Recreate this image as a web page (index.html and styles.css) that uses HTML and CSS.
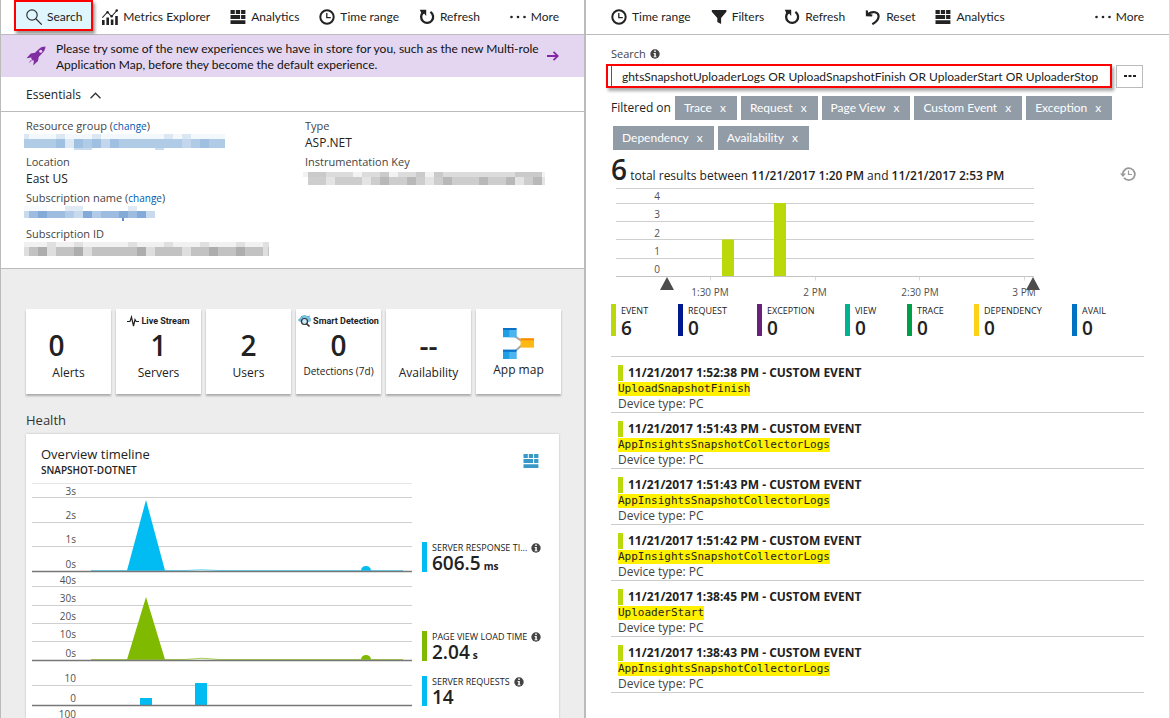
FILE: index.html
```html
<!DOCTYPE html>
<html lang="en">
<head>
<meta charset="utf-8">
<title>Application Insights</title>
<link rel="stylesheet" href="styles.css">
</head>
<body>
<svg class="defs" aria-hidden="true">
  <symbol id="i-search" viewBox="0 0 16 16"><g fill="none" stroke="#333" stroke-width="1.2"><circle cx="6" cy="6" r="5.2"/><path d="M9.8 9.8l6 5.9"/></g></symbol>
  <symbol id="i-metrics" viewBox="0 0 16 16"><path fill="#222" d="M0 11h2.6v5H0zM4.4 8.500h2.600V16H4.400zM8.800 10.500h2.600V16H8.800zM13.200 7h2.600v9h-2.600z"/><path fill="none" stroke="#222" stroke-width="1.100" d="M.3 8.700L5.500 3l4 4.500L15.300 1"/><circle cx="5.500" cy="3.300" r="1.200" fill="#222"/><circle cx="9.600" cy="7.200" r="1.200" fill="#222"/><circle cx="14.700" cy="1.500" r="1.200" fill="#222"/></symbol>
  <symbol id="i-grid" viewBox="0 0 16 16"><path d="M.5 1h4.300v4H.5zM5.800 1h4.300v4H5.800zM11.100 1h4.300v4h-4.300zM.5 6h9.600v4H.5zM11.100 6h4.300v4h-4.300zM.5 11.200h14.900v3.800H.5z"/></symbol>
  <symbol id="i-clock" viewBox="0 0 16 16"><circle cx="8" cy="8" r="6.700" fill="none" stroke="#222" stroke-width="2"/><path d="M7.800 4v4.700h4" fill="none" stroke="#222" stroke-width="1.300"/></symbol>
  <symbol id="i-refresh" viewBox="0 0 16 16"><path d="M11.400 2.900A6 6 0 1 1 4.200 3.400" fill="none" stroke="#222" stroke-width="2.300"/><path d="M.8.800h6.400v6.200L5.100 4.600 3.200 6z" fill="#222"/></symbol>
  <symbol id="i-dots" viewBox="0 0 16 16"><g fill="#222"><circle cx="1.500" cy="8" r="1.300"/><circle cx="8" cy="8" r="1.300"/><circle cx="14.500" cy="8" r="1.300"/></g></symbol>
  <symbol id="i-filter" viewBox="0 0 16 16"><path d="M.8 1h14.600v1.800L10.100 9v6l-3.800-2V9L.8 2.800z" fill="#222"/></symbol>
  <symbol id="i-reset" viewBox="0 0 16 16"><path d="M3 5.200C7.500 1.500 13.800 3 13.600 7.500c-.1 3-2.600 5.700-6.300 7.700" fill="none" stroke="#222" stroke-width="2.200"/><path d="M.800 1.200l2 .3.500 3.300 4.200.8-.4 2L.9 7.200z" fill="#222"/></symbol>
  <symbol id="i-info" viewBox="0 0 10 10"><circle cx="5" cy="5" r="4.700" fill="#444"/><path d="M4.200 1.600h1.600V3H4.200zM3.600 4h2.200v3.400h.8v.9H3.500v-.9h.8V4.900h-.7z" fill="#fff"/></symbol>
</svg>

<main class="blades">
  <section class="blade blade-overview" aria-label="Overview">
    <div class="toolbar">
      <button class="tool tool-marked"><svg class="icon"><use href="#i-search"/></svg>Search</button>
      <button class="tool"><svg class="icon"><use href="#i-metrics"/></svg>Metrics Explorer</button>
      <button class="tool"><svg class="icon"><use href="#i-grid"/></svg>Analytics</button>
      <button class="tool"><svg class="icon"><use href="#i-clock"/></svg>Time range</button>
      <button class="tool"><svg class="icon"><use href="#i-refresh"/></svg>Refresh</button>
      <button class="tool tool-more"><svg class="icon"><use href="#i-dots"/></svg>More</button>
    </div>

    <a class="banner" href="#preview">
      <svg class="rocket" viewBox="0 0 20 20"><path fill="#7f2da1" d="M19.500.5c-2.600.1-4.700.8-6.300 2.200L9 6.800 4.700 7.400.5 12.300l5-.7-.2 1.200 1.200 1.600 1.500 0-.8 5.100 4.800-4.500.7-4.100 4.200-4.300c1.500-1.600 2.400-3.500 2.600-6.100z"/><circle cx="14.700" cy="5.200" r="1.500" fill="#e4d6f0"/><path d="M5 13.500l-2.500 3.800 3.300-2.400z" fill="#a568bd"/></svg>
      <span class="banner-text">Please try some of the new experiences we have in store for you, such as the new Multi-role Application Map, before they become the default experience.</span>
      <svg class="arrow" viewBox="0 0 12 12"><path d="M0 6h10.500M6.500 1.800L10.800 6l-4.300 4.200" fill="none" stroke="#8426a5" stroke-width="1.800"/></svg>
    </a>

    <button class="essentials-toggle">Essentials
      <svg class="chevron" viewBox="0 0 10 6"><path d="M.5 5.500L5 1l4.500 4.500" fill="none" stroke="#333" stroke-width="1.200"/></svg>
    </button>

    <div class="essentials">
      <dl class="props">
        <dt>Resource group (<a href="#change-group">change</a>)</dt>
        <dd><svg class="redacted" width="201" height="16" viewBox="0 0 201 16" shape-rendering="crispEdges"><path fill="#f3f8fc" d="M0 0h201v5H0z"/><path stroke="#dbe8f4" stroke-width="5" d="M0 2.500h5m27 0h9m27 0h9m63 0h9m9 0h9"/><path fill="#b0cbe6" d="M0 5h201v9H0z"/><path stroke="#9fc0e0" stroke-width="9" d="M32 9.500h9m9 0h9m9 0h9m9 0h9m81 0h9"/><path stroke="#dce8f4" stroke-width="9" d="M41 9.500h9"/><path stroke="#c2d6ed" stroke-width="9" d="M77 9.500h9m72 0h9"/><path stroke="#c9dcef" stroke-width="2" d="M50 15h18m63 0h9"/></svg></dd>
        <dt>Location</dt>
        <dd>East US</dd>
        <dt>Subscription name (<a href="#change-subscription">change</a>)</dt>
        <dd><svg class="redacted" width="131" height="16" viewBox="0 0 131 16" shape-rendering="crispEdges"><path fill="#f8fbfd" d="M0 0h23v5H0z"/><path stroke="#dfeaf4" stroke-width="5" d="M41 2.500h18m45 0h9"/><path fill="#9dbce0" d="M5 5h126v7H5z"/><path stroke="#c7daee" stroke-width="7" d="M0 8.500h5m45 0h9m63 0h9"/><path stroke="#84aad8" stroke-width="7" d="M14 8.500h9m36 0h9m27 0h9m9 0h9"/><path stroke="#b2cbe8" stroke-width="7" d="M41 8.500h9m18 0h9"/><path fill="#5e91cc" d="M98 12h2v3h-2z"/></svg></dd>
        <dt>Subscription ID</dt>
        <dd><svg class="redacted" width="245" height="16" viewBox="0 0 245 16" shape-rendering="crispEdges"><path fill="#f1f1f1" d="M0 0h245v5H0z"/><path stroke="#e0e0e0" stroke-width="5" d="M23 2.500h9m18 0h9m45 0h9m27 0h9m27 0h9m27 0h9m18 0h9"/><path fill="#c2c2c2" d="M0 5h245v9H0z"/><path stroke="#adadad" stroke-width="9" d="M14 9.500h9m27 0h9m54 0h9m63 0h9m18 0h9"/><path stroke="#dedede" stroke-width="9" d="M0 9.500h5m18 0h9m27 0h9m54 0h9m27 0h9m72 0h5"/></svg></dd>
      </dl>
      <dl class="props">
        <dt>Type</dt>
        <dd>ASP.NET</dd>
        <dt>Instrumentation Key</dt>
        <dd><svg class="redacted" width="242" height="16" viewBox="0 0 242 16" shape-rendering="crispEdges"><path fill="#dcdcdc" d="M0 2h242v5H0z"/><path stroke="#cacaca" stroke-width="5" d="M5 4.500h18m54 0h9m27 0h9m9 0h9m72 0h27"/><path stroke="#f2f2f2" stroke-width="5" d="M0 4.500h5m45 0h9m27 0h9m27 0h9m108 0h3"/><path fill="#cdcdcd" d="M5 7h234v8H5z"/><path stroke="#b8b8b8" stroke-width="8" d="M77 11h9m18 0h9m27 0h9m27 0h9m18 0h9m18 0h9"/><path stroke="#e4e4e4" stroke-width="8" d="M23 11h9m27 0h9m54 0h9m81 0h9m18 0h3"/></svg></dd>
      </dl>
    </div>

    <div class="overview-body">
      <div class="tiles">
        <a class="tile" href="#alerts"><span class="tile-number tile-number-slot">0</span><span class="tile-label">Alerts</span></a>
        <a class="tile" href="#servers">
          <span class="tile-head"><svg width="12" height="12" viewBox="0 0 12 12"><path d="M0 6.500h3L4.500 2l2 9L8 4.500l1.200 2H12" fill="none" stroke="#222" stroke-width="1.200"/></svg>Live Stream</span>
          <span class="tile-number">1</span><span class="tile-label">Servers</span></a>
        <a class="tile" href="#users"><span class="tile-number">2</span><span class="tile-label">Users</span></a>
        <a class="tile" href="#detections">
          <span class="tile-head"><svg width="13" height="12" viewBox="0 0 13 12"><path d="M2 7a3 3 0 0 1 1-5 4 4 0 0 1 7 0 2.500 2.500 0 0 1 1 5z" fill="#7cc3e2"/><path d="M0 5h3M3 1l2 2M9 2l3-1" stroke="#4ba3cc"/><circle cx="6.500" cy="6.500" r="3" fill="#cdeaf5" stroke="#333" stroke-width="1.200"/><path d="M8.500 8.700l3 2.800" stroke="#333" stroke-width="1.600"/></svg>Smart Detection</span>
          <span class="tile-number">0</span><span class="tile-label tile-label-small">Detections (7d)</span></a>
        <a class="tile" href="#availability"><span class="tile-number">--</span><span class="tile-label">Availability</span></a>
        <a class="tile tile-map" href="#app-map">
          <svg class="app-map" viewBox="0 0 30 30"><path d="M10 7l10 7M10 24l10-9" stroke="#aaa" stroke-width="2"/><path fill="#1f9fe5" d="M0 0h13v9H0zM0 21h13v9H0z"/><path fill="#4db4ee" d="M6 2h7v7H6zM6 23h7v7H6z"/><path fill="#0a72c9" d="M0 0h13v2H0zM0 21h13v2H0z"/><path fill="#ffb914" d="M17 10h13v9H17z"/><path fill="#ff8c00" d="M17 10h13v2H17z"/></svg>
          <span class="tile-label">App map</span></a>
      </div>

      <h2 class="section-title">Health</h2>

      <article class="card">
        <header class="card-head">
          <div>
            <h3>Overview timeline</h3>
            <p>SNAPSHOT-DOTNET</p>
          </div>
          <svg class="card-icon"><use href="#i-grid"/></svg>
        </header>
        <div class="timeline">
          <svg class="timeline-chart" viewBox="0 0 380 250" role="img" aria-label="Overview timeline chart">
            <path stroke="#e6e6e6" d="M0 .5h380"/>
            <path stroke="#cfcfcf" d="M0 14.500h380M0 39.500h380M0 63.500h380M0 103.500h380M0 122.500h380M0 140.500h380M0 158.500h380M0 202.500h380"/>
            <path fill="#00bcf2" d="M95 87.500L114 17l19 70.500zM329 87.500a5 4.500 0 0 1 10 0z"/>
            <path fill="none" stroke="#00bcf2" stroke-opacity=".6" d="M59 87.500h94q17-1.500 34 0h184"/>
            <path fill="#7fba00" d="M95 176.500L114 114l19 62.500zM329 176.500a5 4.500 0 0 1 10 0z"/>
            <path fill="none" stroke="#7fba00" stroke-opacity=".7" d="M59 176.500h94q17-2.500 34 0h184"/>
            <path fill="#00bcf2" d="M108 215h12v7h-12zM163 200h12v22h-12z"/>
            <path stroke="#777" stroke-width="1.500" d="M0 88.500h380M0 177.500h380M0 222.500h380"/>
            <g class="axis" text-anchor="end">
              <text x="44" y="12">3s</text><text x="44" y="36">2s</text><text x="44" y="60">1s</text><text x="44" y="85">0s</text>
              <text x="44" y="101">40s</text><text x="44" y="119">30s</text><text x="44" y="137">20s</text><text x="44" y="155">10s</text><text x="44" y="174">0s</text>
              <text x="44" y="199">10</text><text x="44" y="219">0</text><text x="44" y="235">100</text>
            </g>
          </svg>
          <div class="timeline-legend">
            <div class="metric metric-cyan metric-response"><div class="metric-name"><span>SERVER RESPONSE TI...</span><svg class="info"><use href="#i-info"/></svg></div><div class="metric-value">606.5<small>ms</small></div></div>
            <div class="metric metric-green metric-load"><div class="metric-name"><span>PAGE VIEW LOAD TIME</span><svg class="info"><use href="#i-info"/></svg></div><div class="metric-value">2.04<small>s</small></div></div>
            <div class="metric metric-cyan"><div class="metric-name"><span>SERVER REQUESTS</span><svg class="info"><use href="#i-info"/></svg></div><div class="metric-value">14</div></div>
          </div>
        </div>
      </article>
    </div>
  </section>

  <section class="blade blade-search" aria-label="Search">
    <div class="toolbar">
      <button class="tool"><svg class="icon"><use href="#i-clock"/></svg>Time range</button>
      <button class="tool"><svg class="icon"><use href="#i-filter"/></svg>Filters</button>
      <button class="tool"><svg class="icon"><use href="#i-refresh"/></svg>Refresh</button>
      <button class="tool"><svg class="icon"><use href="#i-reset"/></svg>Reset</button>
      <button class="tool"><svg class="icon"><use href="#i-grid"/></svg>Analytics</button>
      <button class="tool tool-more"><svg class="icon"><use href="#i-dots"/></svg>More</button>
    </div>

    <div class="search-body">
      <label class="search-label" for="query">Search <svg class="info"><use href="#i-info"/></svg></label>
      <div class="search-row">
        <div class="search-frame"><input id="query" type="text" value="ghtsSnapshotUploaderLogs OR UploadSnapshotFinish OR UploaderStart OR UploaderStop"></div>
        <button class="search-more" aria-label="More search options"><svg width="12" height="4" viewBox="0 0 12 4"><path d="M0 1h3v2H0zM4.500 1h3v2h-3zM9 1h3v2H9z" fill="#222"/></svg></button>
      </div>

      <div class="filters">
        <span class="filters-label">Filtered on</span>
        <button class="chip">Trace <span>x</span></button>
        <button class="chip">Request <span>x</span></button>
        <button class="chip">Page View <span>x</span></button>
        <button class="chip">Custom Event <span>x</span></button>
        <button class="chip">Exception <span>x</span></button>
        <button class="chip">Dependency <span>x</span></button>
        <button class="chip">Availability <span>x</span></button>
      </div>

      <div class="summary">
        <p><span class="count">6</span> total results between <b>11/21/2017 1:20 PM</b> and <b>11/21/2017 2:53 PM</b></p>
        <svg class="history" viewBox="0 0 16 16"><path d="M2.800 8A6 6 0 1 1 4 11.800" fill="none" stroke="#999" stroke-width="1.800"/><path d="M0 7.500h6L3 11z" fill="#999"/><path d="M8.500 4.500v4h3.500" fill="none" stroke="#999" stroke-width="1.200"/></svg>
      </div>

      <svg class="results-chart" viewBox="0 0 533 112" role="img" aria-label="Results over time">
        <path stroke="#cfcfcf" d="M5 .5h418M5 15.500h418M5 33.500h418M5 51.500h418M5 70.500h418"/>
        <path stroke="#c4c4c4" d="M5 88.500h418"/>
        <path stroke="#d8d8d8" d="M99.500 89v3.500M204.500 89v3.500M308.500 89v3.500M413.500 89v3.500"/>
        <path fill="#bad80a" d="M111 51.500h12V88h-12zM163 15h12v73h-12z"/>
        <g class="axis"><g text-anchor="end"><text x="49" y="12">4</text><text x="49" y="30">3</text><text x="49" y="49">2</text><text x="49" y="67">1</text><text x="49" y="85">0</text></g>
        <g text-anchor="middle"><text x="99" y="108">1:30 PM</text><text x="204" y="108">2 PM</text><text x="309" y="108">2:30 PM</text><text x="413" y="108">3 PM</text></g></g>
        <path fill="#4d4d4d" d="M56 89l7 13H49zM422 89l7 13h-14z"/>
      </svg>

      <div class="totals">
        <div class="total total-event"><span>EVENT</span><b>6</b></div>
        <div class="total total-request"><span>REQUEST</span><b>0</b></div>
        <div class="total total-exception"><span>EXCEPTION</span><b>0</b></div>
        <div class="total total-view"><span>VIEW</span><b>0</b></div>
        <div class="total total-trace"><span>TRACE</span><b>0</b></div>
        <div class="total total-dependency"><span>DEPENDENCY</span><b>0</b></div>
        <div class="total total-avail"><span>AVAIL</span><b>0</b></div>
      </div>

      <ul class="events">
        <li><h4>11/21/2017 1:52:38 PM - CUSTOM EVENT</h4><mark>UploadSnapshotFinish</mark><p>Device type: PC</p></li>
        <li><h4>11/21/2017 1:51:43 PM - CUSTOM EVENT</h4><mark>AppInsightsSnapshotCollectorLogs</mark><p>Device type: PC</p></li>
        <li><h4>11/21/2017 1:51:43 PM - CUSTOM EVENT</h4><mark>AppInsightsSnapshotCollectorLogs</mark><p>Device type: PC</p></li>
        <li><h4>11/21/2017 1:51:42 PM - CUSTOM EVENT</h4><mark>AppInsightsSnapshotCollectorLogs</mark><p>Device type: PC</p></li>
        <li><h4>11/21/2017 1:38:45 PM - CUSTOM EVENT</h4><mark>UploaderStart</mark><p>Device type: PC</p></li>
        <li><h4>11/21/2017 1:38:43 PM - CUSTOM EVENT</h4><mark>AppInsightsSnapshotCollectorLogs</mark><p>Device type: PC</p></li>
      </ul>
    </div>
  </section>
</main>
</body>
</html>
```
FILE: styles.css
```css
* { box-sizing: border-box; }

body {
  margin: 0;
  font: 12px/16px "Open Sans", "Noto Sans", sans-serif;
  color: #222;
  background: #fff;
}

h2, h3, h4, p, dl, dd, ul { margin: 0; padding: 0; font-weight: 400; }
ul { list-style: none; }
a { color: inherit; text-decoration: none; }
button, input { font: inherit; color: inherit; }
button { border: 0; padding: 0; background: none; cursor: pointer; }
svg { flex: none; }
.defs { display: none; }

.blades {
  display: grid;
  grid-template-columns: 586fr 584fr;
  height: 100vh;
  overflow: hidden;
}
.blade { display: flex; flex-direction: column; min-width: 0; overflow: hidden; }
.blade-overview { border-left: 1px solid #bbb; border-right: 2px solid #bbb; }
.blade-search { border-right: 1px solid #dcdce4; }

/* Command bar */
.toolbar {
  display: flex;
  gap: 20px;
  flex: none;
  height: 35px;
  padding: 0 25px;
  border-bottom: 1px solid #bbb;
}
.toolbar, .banner, .search-frame, .chip { font-family: Lato, "Open Sans", sans-serif; }
.tool { display: flex; align-items: center; gap: 5px; height: 34px; white-space: nowrap; }
.tool-more { margin-left: auto; }
.tool-marked {
  height: 31px;
  margin: 0 -11px 0 -12px;
  padding: 2px 9px 0 10px;
  border: 2px solid #f00;
  background: #e0f6ff;
  box-shadow: 2px 3px 3px #999;
}
.icon { width: 16px; height: 16px; fill: #222; }

/* Announcement */
.banner {
  display: flex;
  align-items: center;
  flex: none;
  min-height: 42px;
  padding: 0 25px;
  background: #e4d6f0;
  color: #111;
}
.rocket { width: 20px; height: 20px; }
.banner-text { flex: 1; margin: 2px 6px 0 10px; }
.arrow { width: 12px; height: 12px; }

.essentials-toggle {
  display: flex;
  align-items: center;
  flex: none;
  gap: 9px;
  height: 35px;
  padding: 2px 25px 0;
  border-bottom: 1px solid #bbb;
}
.chevron { width: 11px; height: 7px; }

.essentials {
  display: grid;
  grid-template-columns: 279fr 279fr;
  flex: none;
  padding: 6px 0 10px 25px;
  border-bottom: 1px solid #bbb;
}
.props dt { height: 16px; font-size: 11px; line-height: 16px; color: #444; }
.props dt a { font-size: 10px; color: #0058ad; }
.props dd { height: 20px; line-height: 17px; }
.props dd:last-child { height: 16px; }
.redacted { display: block; margin-left: -2px; }

/* Overview body */
.overview-body { flex: 1; padding: 40px 23px 0 25px; background: #ededed; }
.tiles { display: grid; grid-template-columns: repeat(6, minmax(0, 1fr)); gap: 5px; }
.tile {
  display: flex;
  flex-direction: column;
  align-items: center;
  justify-content: flex-end;
  height: 85px;
  padding-bottom: 13px;
  background: #fff;
  box-shadow: 0 2px 2px #aaa;
}
.tile-map { padding-bottom: 16px; }
.tile-head {
  display: flex;
  align-items: center;
  gap: 2px;
  font: 700 9px/12px Roboto, "Open Sans", sans-serif;
  white-space: nowrap;
}
.tile-number { height: 36px; margin-bottom: 2px; font-size: 28px; line-height: 36px; font-weight: 600; }
.tile-number-slot { padding-right: 24px; }
.tile-label-small { height: 16px; font-size: 10px; line-height: 13px; }
.app-map { width: 31px; height: 31px; margin-bottom: 3px; }

.section-title { margin: 17px 0 5px; font-size: 13px; line-height: 18px; color: #333; }

.card { min-height: 300px; margin-right: 2px; padding: 11px 6px 0; background: #fff; box-shadow: 0 0 2px #bbb; }
.card-head { display: flex; justify-content: space-between; padding: 0 14px 6px 9px; }
.card-head h3 { font-size: 13px; line-height: 18px; }
.card-head p { font-size: 10px; line-height: 14px; font-weight: 600; }
.card-icon { width: 16px; height: 16px; margin-top: 8px; fill: #3999c6; }

.timeline { display: grid; grid-template-columns: 380fr 131fr; gap: 10px; align-items: start; }
.timeline-chart, .results-chart { display: block; width: 100%; }
.axis { font-size: 10px; fill: #505050; }
.timeline-legend { padding-top: 59px; min-width: 0; }
.metric { height: 30px; padding-left: 5px; border-left: 5px solid; }
.metric-cyan { border-color: #00bcf2; }
.metric-green { border-color: #7fba00; }
.metric-response { margin-bottom: 59px; }
.metric-load { margin-bottom: 15px; }
.metric-name { display: flex; align-items: center; gap: 4px; font-size: 9px; line-height: 11px; white-space: nowrap; }
.metric-value { font-size: 19px; line-height: 20px; font-weight: 600; }
.metric-value small { margin-left: 3px; font-size: 10px; line-height: 10px; font-weight: 700; }
.info { width: 10px; height: 10px; }

/* Search blade */
.search-body { padding: 11px 25px 0; }
.search-label { display: flex; align-items: center; gap: 4px; font-size: 11px; color: #444; }
.search-row { display: flex; align-items: center; gap: 4px; margin: 2px 1px 8px -5px; }
.search-frame {
  flex: 1;
  height: 24px;
  padding-left: 3px;
  border: 2px solid #f00;
  box-shadow: 2px 3px 3px #aaa;
}
.search-frame input {
  width: 100%;
  height: 20px;
  padding: 0 8px 0 10px;
  border: 0;
  border-left: 1px solid #2b5fb0;
  outline: 0;
  background: #fff;
}
.search-more {
  display: flex;
  align-items: center;
  justify-content: center;
  width: 27px;
  height: 23px;
  border: 1px solid #bbb;
}

.filters { display: flex; flex-wrap: wrap; row-gap: 6px; }
.filters-label { margin-right: 2px; line-height: 24px; }
.chip {
  display: flex;
  align-items: center;
  gap: 8px;
  height: 24px;
  margin: 0 2px;
  padding: 0 11px 0 9px;
  background: #919ca7;
  color: #fff;
}

.summary { display: flex; align-items: center; justify-content: space-between; height: 38px; padding-right: 8px; }
.summary b { font-weight: 600; }
.count { font-size: 28px; line-height: 36px; font-weight: 600; }
.history { width: 16px; height: 16px; margin-top: 10px; }

.totals { display: grid; grid-template-columns: 67fr 79fr 88fr 62fr 67fr 98fr 72fr; margin-top: 4px; }
.total { display: flex; flex-direction: column; height: 32px; padding-left: 5px; border-left: 5px solid; }
.total span { font-size: 9px; line-height: 13px; }
.total b { font-size: 19px; line-height: 22px; font-weight: 600; }
.total-event { border-color: #bad80a; }
.total-request { border-color: #00188f; }
.total-exception { border-color: #68217a; }
.total-view { border-color: #00b294; }
.total-trace { border-color: #009e49; }
.total-dependency { border-color: #fcd116; }
.total-avail { border-color: #0072c6; }

.events { margin-top: 20px; border-top: 1px solid #ccc; }
.events li { height: 56px; padding: 8px 7px 0; border-bottom: 1px solid #ccc; }
.events h4 { padding-left: 5px; border-left: 5px solid #bad80a; line-height: 16px; font-weight: 700; }
.events mark {
  display: table;
  margin-top: 1px;
  background: #fff100;
  color: #222;
  font: 11px/14px "DejaVu Sans Mono", monospace;
}
.events p { line-height: 16px; color: #444; }
```
